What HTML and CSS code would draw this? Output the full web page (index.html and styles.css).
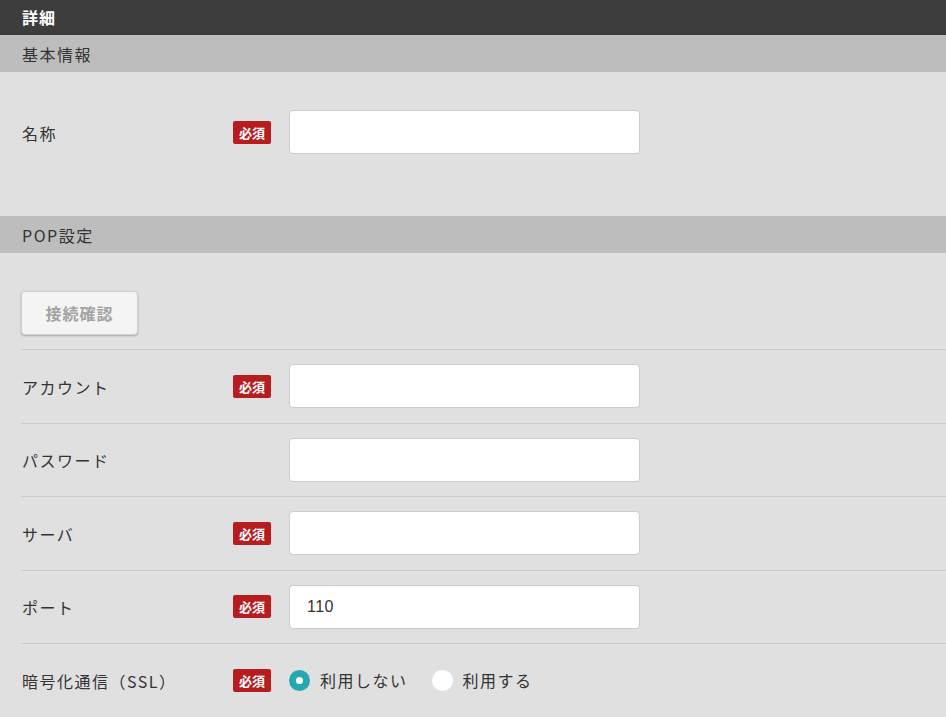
FILE: index.html
```html
<!DOCTYPE html>
<html lang="ja">
<head>
    <meta charset="UTF-8">
    <meta name="viewport" content="width=device-width, initial-scale=1.0">
    <title>詳細</title>
    <link rel="stylesheet" href="styles.css">
</head>
<body>
    <div class="title-bar">詳細</div>

    <div class="section-title">基本情報</div>
    <div class="section-body section-basic">
        <div class="form-row first">
            <label class="form-label" for="name">名称</label>
            <span class="badge">必須</span>
            <input type="text" id="name" class="form-control">
        </div>
    </div>

    <div class="section-title">POP設定</div>
    <div class="section-body">
        <div class="button-row">
            <button class="btn-check" disabled>接続確認</button>
        </div>
        <div class="form-row">
            <label class="form-label" for="account">アカウント</label>
            <span class="badge">必須</span>
            <input type="text" id="account" class="form-control">
        </div>
        <div class="form-row">
            <label class="form-label" for="password">パスワード</label>
            <span></span>
            <input type="password" id="password" class="form-control">
        </div>
        <div class="form-row">
            <label class="form-label" for="server">サーバ</label>
            <span class="badge">必須</span>
            <input type="text" id="server" class="form-control">
        </div>
        <div class="form-row">
            <label class="form-label" for="port">ポート</label>
            <span class="badge">必須</span>
            <input type="text" id="port" class="form-control" value="110">
        </div>
        <div class="form-row">
            <span class="form-label">暗号化通信（SSL）</span>
            <span class="badge">必須</span>
            <div class="radio-group">
                <label class="radio"><span class="radio-mark checked"></span>利用しない</label>
                <label class="radio"><span class="radio-mark"></span>利用する</label>
            </div>
        </div>
    </div>
</body>
</html>
```

FILE: styles.css
```css
* {
    margin: 0;
    padding: 0;
    box-sizing: border-box;
}

body {
    background-color: #e0e0e0;
    color: #333333;
    font-family: "Noto Sans CJK JP", "Noto Sans", sans-serif;
    font-size: 16px;
    letter-spacing: 1.5px;
}

.title-bar {
    height: 35px;
    line-height: 35px;
    padding-left: 22px;
    background-color: #3d3d3d;
    color: white;
    font-weight: bold;
    letter-spacing: 1px;
}

.section-title {
    height: 37px;
    line-height: 38px;
    padding-left: 22px;
    background-color: #bdbdbd;
    color: #333333;
}

.section-body {
    padding: 24px 0 0 21px;
}

.section-basic {
    padding-bottom: 48px;
}

.button-row {
    padding: 14px 0;
}

.btn-check {
    width: 117px;
    height: 44px;
    background-color: #f4f4f4;
    border: 1px solid #cfcfcf;
    border-radius: 4px;
    box-shadow: 0 1px 2px rgba(0, 0, 0, 0.25);
    color: #a3a3a3;
    font-family: inherit;
    font-size: 16px;
    font-weight: bold;
    letter-spacing: 1px;
}

.form-row {
    display: grid;
    grid-template-columns: 212px 56px 351px;
    align-items: center;
    min-height: 44px;
    padding: 14px 0 14.5px;
    border-top: 1px solid #c9c9c9;
    box-sizing: content-box;
}

.form-row.first {
    border-top: none;
    padding: 14px 0;
}

.form-label {
    padding-left: 1px;
    padding-top: 1px;
}

.badge {
    display: inline-block;
    width: 38px;
    height: 23px;
    line-height: 23px;
    text-align: center;
    background-color: #b71c1f;
    color: white;
    border-radius: 2px;
    font-size: 13px;
    font-weight: bold;
    letter-spacing: 0;
}

.form-control {
    width: 351px;
    height: 44px;
    padding: 0 17px;
    background-color: white;
    border: 1px solid #cccccc;
    border-radius: 4px;
    color: #333333;
    font-family: "Liberation Sans", Arial, sans-serif;
    font-size: 16px;
    letter-spacing: 0.5px;
}

.radio-group {
    display: flex;
    align-items: center;
    gap: 24px;
    white-space: nowrap;
}

.radio {
    display: flex;
    align-items: center;
    gap: 10px;
}

.radio-mark {
    width: 21px;
    height: 21px;
    border-radius: 50%;
    background-color: white;
    display: flex;
    align-items: center;
    justify-content: center;
}

.radio-mark.checked {
    background-color: #26a8b0;
}

.radio-mark.checked::after {
    content: "";
    width: 7px;
    height: 7px;
    border-radius: 50%;
    background-color: white;
}
```
